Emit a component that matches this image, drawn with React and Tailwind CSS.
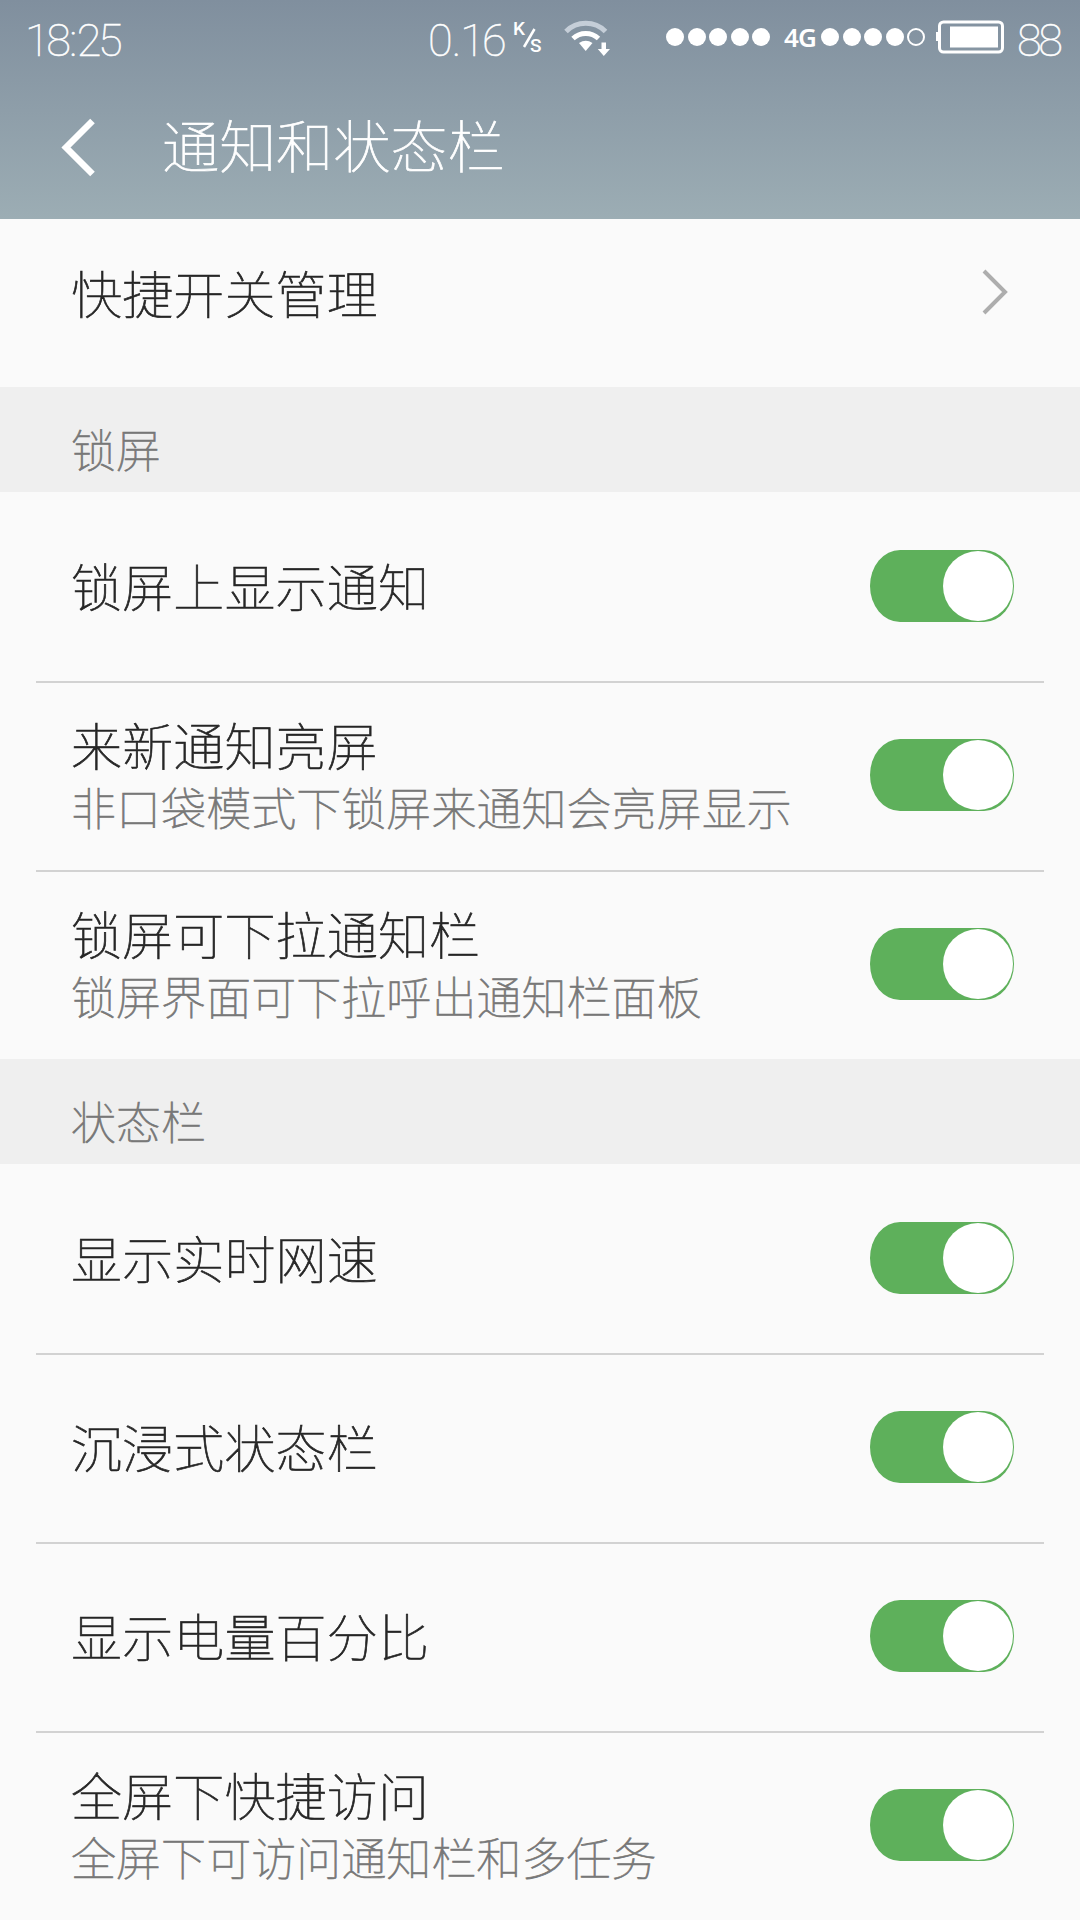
const SECTIONS = [
  {
    title: "锁屏",
    rows: [
      { label: "锁屏上显示通知" },
      { label: "来新通知亮屏", hint: "非口袋模式下锁屏来通知会亮屏显示" },
      { label: "锁屏可下拉通知栏", hint: "锁屏界面可下拉呼出通知栏面板" },
    ],
  },
  {
    title: "状态栏",
    rows: [
      { label: "显示实时网速" },
      { label: "沉浸式状态栏" },
      { label: "显示电量百分比" },
      { label: "全屏下快捷访问", hint: "全屏下可访问通知栏和多任务" },
    ],
  },
];

function Dots({ filled, total = 5 }) {
  return (
    <div className="flex gap-[3.5px]">
      {Array.from({ length: total }, (_, i) => (
        <span
          key={i}
          className={`size-[18px] rounded-full ${i < filled ? "bg-white" : "border-2 border-white"}`}
        />
      ))}
    </div>
  );
}

function WifiIcon() {
  return (
    <svg width="48" height="38" viewBox="0 0 48 38" fill="none" className="shrink-0">
      <path d="M2 13.5 A28 28 0 0 1 41.5 13.5" stroke="#c5ced8" strokeWidth="5" />
      <path d="M9 20.5 A19 19 0 0 1 34.5 20.5" stroke="#fff" strokeWidth="5" />
      <path d="M15 25 Q21.7 20.5 28.5 25 L21.7 33 Z" fill="#fff" />
      <path d="M37.5 24.5h4.5v6.500h4l-6.200 7-6-7h3.700z" fill="#fff" />
    </svg>
  );
}

function BatteryIcon() {
  return (
    <svg width="68" height="34" viewBox="0 0 68 34" fill="none" className="shrink-0">
      <rect x="0" y="12" width="3" height="9" fill="#fff" />
      <rect x="3.500" y="2" width="63" height="30" rx="4" stroke="#fff" strokeWidth="3" />
      <rect x="14" y="6.500" width="48" height="21" fill="#fff" />
    </svg>
  );
}

function StatusBar() {
  return (
    <div className="flex h-[74px] items-center pl-[25px] text-[45px] font-thin leading-[74px] font-['Roboto','Liberation_Sans',sans-serif]">
      <span className="w-[403px] pt-[8px] tracking-[-3.5px] [-webkit-text-stroke:0.5px]">
        18<span className="ml-[2px] mr-[3px]">:</span>25
      </span>
      <span className="w-[85px] pt-[8px] tracking-[-3px] [-webkit-text-stroke:0.5px]">
        0<span className="ml-[2px] mr-[2px]">.</span>16
      </span>
      <div className="relative h-[34px] w-[51px] font-medium [-webkit-text-stroke:0px]">
        <span className="absolute left-0 top-[2px] text-[19px] leading-[14px]">K</span>
        <svg width="14" height="20" viewBox="0 0 14 20" className="absolute left-[9px] top-[8px]">
          <path d="M12.500 1L2 19" stroke="#fff" strokeWidth="2.500" />
        </svg>
        <span className="absolute left-[17px] top-[19px] text-[19px] leading-[14px]">S</span>
      </div>
      <WifiIcon />
      <div className="ml-[54px] flex items-center">
        <Dots filled={5} />
        <span className="ml-[14px] w-[37px] text-[26px] font-semibold leading-[36px] tracking-[-0.8px] [-webkit-text-stroke:0px] font-['Noto_Sans','Open_Sans',sans-serif]">
          4G
        </span>
        <Dots filled={4} />
      </div>
      <div className="ml-[11px]">
        <BatteryIcon />
      </div>
      <span className="ml-[13px] pt-[8px] tracking-[-3.5px] [-webkit-text-stroke:0.5px]">88</span>
    </div>
  );
}

function Toggle() {
  return (
    <div className="mb-[2px] flex h-[72px] w-[144px] shrink-0 items-center justify-end rounded-[30px/36px] bg-[#5eb05b] pr-px">
      <span className="size-[70px] rounded-full bg-white" />
    </div>
  );
}

function SettingRow({ label, hint, divider }) {
  return (
    <div className="relative flex h-[189px] items-center justify-between pl-[71px] pr-[66px]">
      {divider && <div className="absolute left-[36px] right-[36px] top-0 h-[2px] bg-[#d2d2d2]" />}
      <div className="pb-[4px]">
        <p className="text-[51px] leading-[66px] tracking-[0.15px] text-[#262626]">{label}</p>
        {hint && <p className="text-[45px] leading-[60px] tracking-[0.05px] text-[#777]">{hint}</p>}
      </div>
      <Toggle />
    </div>
  );
}

export default function App() {
  return (
    <div className="h-[1920px] w-[1080px] overflow-hidden bg-[#fafafa] font-thin whitespace-nowrap [-webkit-text-stroke:0.7px] font-['Noto_Sans_CJK_SC',sans-serif]">
      <header className="h-[219px] bg-linear-to-b from-[#808f9e] to-[#9cadb4] text-white">
        <StatusBar />
        <div className="flex h-[145px] items-center pl-[60px]">
          <svg width="36" height="60" viewBox="0 0 36 60" fill="none">
            <path d="M32.500 4L6 30.500L32.500 57" stroke="#fff" strokeWidth="6.500" />
          </svg>
          <h1 className="ml-[66px] pb-[7px] text-[57px] leading-[80px] tracking-[0.15px]">通知和状态栏</h1>
        </div>
      </header>

      <div className="flex h-[168px] items-center justify-between pb-[23px] pl-[71px] pr-[71px]">
        <p className="text-[51px] leading-[66px] tracking-[0.15px] text-[#262626]">快捷开关管理</p>
        <svg width="28" height="46" viewBox="0 0 28 46" fill="none">
          <path d="M3 2L24 23L3 44" stroke="#adadad" strokeWidth="4" />
        </svg>
      </div>

      {SECTIONS.map((section) => (
        <section key={section.title}>
          <h2 className="h-[105px] bg-[#efefef] pl-[71px] pt-[32px] text-[45px] leading-[60px] text-[#777]">
            {section.title}
          </h2>
          {section.rows.map((row, i) => (
            <SettingRow key={row.label} {...row} divider={i > 0} />
          ))}
        </section>
      ))}
    </div>
  );
}
